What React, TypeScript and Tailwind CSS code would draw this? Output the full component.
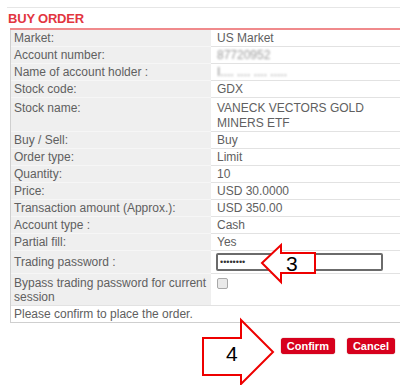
import React from "react";

type Row = { label: React.ReactNode; value: React.ReactNode; h?: string };

const rows: Row[] = [
  { label: "Market:", value: "US Market" },
  {
    label: "Account number:",
    value: <span className="text-[#9a9a9a] blur-[0.8px]">87720952</span>,
  },
  {
    label: "Name of account holder :",
    value: <span className="text-[#8a8a8a] blur-[0.8px]">I.... .... .... .....</span>,
  },
  { label: "Stock code:", value: "GDX" },
  {
    label: "Stock name:",
    value: (
      <>
        VANECK VECTORS GOLD
        <br />
        MINERS ETF
      </>
    ),
    h: "h-[34px] pt-[3px] !leading-[15px]",
  },
  { label: "Buy / Sell:", value: "Buy" },
  { label: "Order type:", value: "Limit" },
  { label: "Quantity:", value: "10" },
  { label: "Price:", value: "USD 30.0000" },
  { label: "Transaction amount (Approx.):", value: "USD 350.00" },
  { label: "Account type :", value: "Cash" },
  { label: "Partial fill:", value: "Yes" },
];

export default function App() {
  return (
    <div className="relative w-[417px] h-[385px] overflow-hidden bg-white font-['Liberation_Sans',Arial,sans-serif] text-[12px] text-[#606060]">
      <div className="ml-[7px] mt-[7px] w-[393px] border-t border-[#e6e6e6]" />
      <h2 className="ml-[8px] mt-[3px] text-[13px] leading-[16px] font-bold tracking-[-0.2px] text-[#e2363f]">
        BUY ORDER
      </h2>
      <div className="ml-[10px] mt-[1px] w-[390px] h-[2px] bg-[#f08a8c]" />

      <div className="ml-[10px] w-[390px] border-l border-b border-[#cfcfcf]">
        {rows.map((r, i) => (
          <div key={i} className="grid grid-cols-[200px_1fr]">
            <div className={`bg-[#efefef] border-b border-[#f6f6f6] pl-[3px] leading-[16px] ${r.h ?? "h-[17px]"}`}>
              {r.label}
            </div>
            <div className={`border-b border-[#e2e2e2] pl-[6px] leading-[16px] ${r.h ?? "h-[17px]"}`}>
              {r.value}
            </div>
          </div>
        ))}

        <div className="grid grid-cols-[200px_1fr]">
          <div className="bg-[#efefef] border-b border-[#f6f6f6] pl-[3px] h-[23px] flex items-center">
            Trading password :
          </div>
          <div className="border-b border-[#e2e2e2] pl-[5px] h-[23px] flex items-center">
            <input
              type="password"
              readOnly
              defaultValue="12345678"
              className="w-[167px] h-[18px] border-2 border-[#6b6b6b] rounded-[2px] px-[2px] text-[9px] text-[#333] outline-none"
            />
          </div>
        </div>

        <div className="grid grid-cols-[200px_1fr]">
          <div className="bg-[#efefef] pl-[3px] pt-[2px] h-[31px] leading-[14px]">
            Bypass trading password for current
            <br />
            session
          </div>
          <div className="pl-[6px] pt-[4px] h-[31px]">
            <div className="w-[11px] h-[11px] rounded-[2px] border border-[#a8a8a8] bg-[#e9e9e9]" />
          </div>
        </div>

        <div className="pl-[3px] h-[17px] leading-[16px] border-t border-[#e2e2e2]">
          Please confirm to place the order.
        </div>
      </div>

      <div className="mt-[15px] mr-[22px] flex justify-end gap-[12px]">
        <button className="h-[16px] px-[6px] rounded-[3px] bg-[#d7001d] text-white text-[11px] leading-[16px] font-bold shadow-[0_0_1px_#900]">
          Confirm
        </button>
        <button className="h-[16px] px-[6px] rounded-[3px] bg-[#d7001d] text-white text-[11px] leading-[16px] font-bold shadow-[0_0_1px_#900]">
          Cancel
        </button>
      </div>

      <svg className="pointer-events-none absolute left-0 top-0" width="417" height="385" viewBox="0 0 417 385">
        <polygon
          points="262,263 281,245 281,253 315,253 315,273 281,273 281,282"
          fill="white"
          stroke="#ee0000"
          strokeWidth="2"
          strokeLinejoin="miter"
        />
        <text x="286" y="271" fontSize="21" fill="#000" fontFamily="Liberation Sans, Arial, sans-serif">
          3
        </text>
        <polygon
          points="203,338 241,338 241,320 273,352 241,384 241,375 203,375"
          fill="white"
          stroke="#ee0000"
          strokeWidth="2"
          strokeLinejoin="miter"
        />
        <text x="226" y="361" fontSize="21" fill="#000" fontFamily="Liberation Sans, Arial, sans-serif">
          4
        </text>
      </svg>
    </div>
  );
}
